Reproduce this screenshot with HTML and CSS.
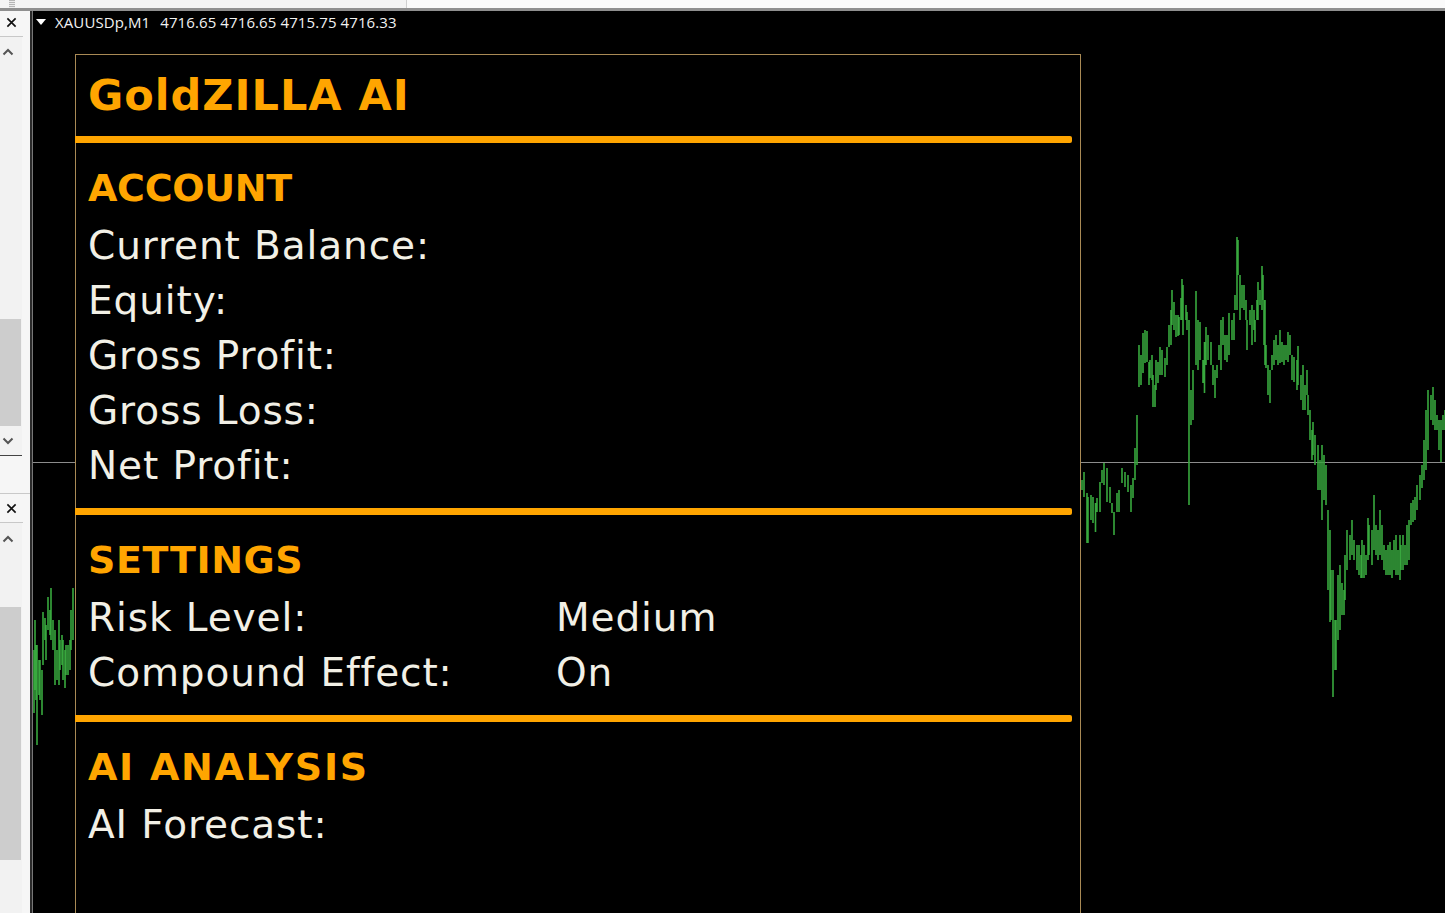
FILE: index.html
```html
<!DOCTYPE html>
<html lang="en">
<head>
<meta charset="utf-8">
<title>GoldZILLA AI</title>
<link rel="stylesheet" href="styles.css">
</head>
<body>
<div class="app">
  <div class="topbar"><div class="tab-a"><div class="grip"></div></div><div class="tab-b"></div></div>
  <div class="main">
    <aside class="side">
      <section class="dock dock-a">
        <div class="dock-head"><svg class="ico" viewBox="0 0 12 12"><path d="M1.5 1.5l9 9M10.5 1.5l-9 9"/></svg></div>
        <div class="track">
          <svg class="chev" viewBox="0 0 12 8"><path d="M1.5 6.5L6 2l4.5 4.5"/></svg>
          <div class="gap-a"></div>
          <div class="thumb thumb-a"></div>
          <svg class="chev" viewBox="0 0 12 8"><path d="M1.5 1.5L6 6l4.5-4.5"/></svg>
        </div>
      </section>
      <section class="dock dock-b">
        <div class="dock-head"><svg class="ico" viewBox="0 0 12 12"><path d="M1.5 1.5l9 9M10.5 1.5l-9 9"/></svg></div>
        <div class="track">
          <svg class="chev" viewBox="0 0 12 8"><path d="M1.5 6.5L6 2l4.5 4.5"/></svg>
          <div class="gap-b"></div>
          <div class="thumb thumb-b"></div>
        </div>
      </section>
    </aside>
    <main class="chart">
      <svg class="plot" viewBox="33 11 1412 902" aria-hidden="true">
        <path class="cross" d="M33 462.5H1445"/>
        <path class="bars" d="M34 650V713M35 620V690M36 645V700M37 645V745M39 660V695M40 660V700M42 670V715M43 612V665M45 618V640M46 625V660M48 597V630M50 610V635M51 588V640M53 620V650M55 630V685M57 650V680M59 620V685M60 640V670M62 635V665M63 640V680M65 650V688M66 645V675M68 645V675M70 640V670M71 610V650M73 588V640M1082 480V490M1084 472V497M1087 493V543M1088 497V543M1091 495V520M1093 497V523M1095.5 503V532M1097 498V512M1100 482V512M1102 470V483M1104 463V485M1107 468V502M1110 487V503M1112 503V513M1114 512V535M1117 493V512M1119 490V512M1122 468V483M1125 472V487M1128 475V492M1131 485V512M1133 478V498M1135 448V480M1137 415V465M1139 345V387M1141 355V385M1143 333V373M1145 330V363M1147 331V362M1149 362V385M1150 360V378M1152 355V380M1153 375V407M1155 385V407M1156 360V390M1158 362V383M1160 347V375M1162 350V375M1165 358V377M1167 347V365M1169 325V347M1171 310V345M1172 290V325M1174 302V330M1176 315V337M1178 315V336M1179 317V335M1181 298V320M1182 279V320M1183 285V335M1186 305V320M1187 312V330M1189 320V505M1191 390V425M1193 370V420M1196 291V365M1198 320V370M1200 322V360M1203 360V383M1204.5 342V393M1206 327V365M1208 335V360M1211 342V365M1213 365V385M1215 370V398M1217 365V378M1219 345V360M1221 320V370M1223 317V345M1225 335V360M1227 335V362M1229 313V355M1232 320V340M1234 313V340M1235 295V310M1237 237V310M1238 240V275M1240 275V320M1242 285V308M1244 285V310M1246 300V320M1247 320V350M1250 310V325M1252 305V345M1254 310V330M1255 320V342M1257 300V320M1258 282V320M1260 290V305M1262 266V310M1263 275V300M1264 300V345M1265 300V365M1266 345V368M1268 365V395M1270 370V403M1272 355V370M1274 340V365M1276 335V360M1278 345V365M1280 330V363M1282 342V362M1284 345V365M1286 345V360M1288 332V362M1290 335V355M1292 355V380M1294 357V382M1297 360V390M1298 346V385M1301 375V400M1303 365V410M1305 385V410M1307 370V395M1308 395V415M1310 410V440M1312 430V460M1313 422V455M1315 435V465M1318 445V490M1320 460V490M1322 445V520M1324 455V500M1326 465V505M1328 510V590M1330 530V622M1331 570V620M1333 570V697M1335 620V670M1336 620V670M1338 575V640M1340 565V630M1342 583V615M1344 590V615M1345 555V600M1347 530V570M1350 535V560M1352 520V555M1354 540V560M1357 545V570M1359 545V575M1361 555V578M1362 540V578M1364 545V578M1366 555V575M1368 518V560M1369 525V555M1372 530V565M1374 495V550M1376 525V555M1378 530V560M1380 510V555M1382 525V560M1384 545V570M1386 550V575M1388 545V575M1390 542V575M1392 550V578M1394 540V570M1396 535V575M1398 550V575M1400 535V580M1401 545V570M1403 535V570M1405 545V565M1407 525V565M1409 520V560M1411 503V525M1413 500V522M1415 497V520M1417 485V510M1420 475V500M1422 465V488M1424 440V480M1426 410V470M1428 390V450M1431 395V420M1433 387V425M1435 400V430M1437 415V430M1439 420V450M1441 420V462M1443 415V430M1445 410V430"/>
      </svg>
      <div class="legend">
        <svg class="tri" viewBox="0 0 10 6"><path d="M0 0H10L5 6Z"/></svg>
        <span class="sym">XAUUSDp,M1</span><span class="ohlc">4716.65 4716.65 4715.75 4716.33</span>
      </div>
      <div class="panel">
        <h1 class="title">GoldZILLA AI</h1>
        <hr class="rule rule-title">
        <h2 class="heading heading-account">ACCOUNT</h2>
        <div class="row">Current Balance:</div>
        <div class="row">Equity:</div>
        <div class="row">Gross Profit:</div>
        <div class="row">Gross Loss:</div>
        <div class="row">Net Profit:</div>
        <hr class="rule rule-section">
        <h2 class="heading heading-settings">SETTINGS</h2>
        <div class="row kv"><span>Risk Level:</span><span>Medium</span></div>
        <div class="row kv"><span>Compound Effect:</span><span>On</span></div>
        <hr class="rule rule-section">
        <h2 class="heading heading-ai">AI ANALYSIS</h2>
        <div class="row">AI Forecast:</div>
      </div>
    </main>
  </div>
</div>
</body>
</html>
```
FILE: styles.css
```css
* { box-sizing: border-box; }
html, body { margin: 0; padding: 0; background: #000; }
.app { width: 1445px; height: 913px; overflow: hidden; display: flex; flex-direction: column; background: #f0f0f0; }

.topbar { height: 11px; flex: none; display: flex; background: #f0f0f0; border-bottom: 3px solid #8f8f8f; }
.tab-a { width: 407px; border-right: 1px solid #d0d0d0; background: #f4f4f4; padding-left: 9px; }
.grip { width: 6px; height: 8px; background: repeating-linear-gradient(180deg, #b5b5b5 0 1px, #ececec 1px 2px); }
.tab-b { flex: 1; background: #fafafa; }

.main { flex: 1; display: flex; min-height: 0; }

.side { width: 33px; flex: none; display: flex; flex-direction: column; background: #f6f6f6; border-right: 1px solid #777; box-shadow: inset -2px 0 0 #2b2b2b; }
.dock { display: flex; flex-direction: column; width: 30px; }
.dock-a { height: 483px; flex: none; border-bottom: 1px solid #c9c9c9; }
.dock-b { flex: 1; }
.dock-head { height: 26px; flex: none; display: flex; align-items: center; padding: 0 0 2px 6px; border-bottom: 1px solid #c8c8c8; margin-right: 7px; }
.dock-b .dock-head { height: 29px; padding-bottom: 0; }
.ico { width: 11px; height: 11px; fill: none; stroke: #111; stroke-width: 1.8; }
.track { width: 22px; display: flex; flex-direction: column; background: #f2f2f2; }
.dock-a .track { height: 419px; flex: none; padding-top: 11px; border-bottom: 1px solid #444; }
.dock-b .track { flex: 1; padding-top: 12px; }
.chev { width: 12px; height: 8px; flex: none; margin-left: 2px; fill: none; stroke: #555; stroke-width: 2; }
.gap-a { height: 263px; flex: none; }
.gap-b { height: 64px; flex: none; }
.thumb { width: 21px; background: #cdcdcd; flex: none; }
.thumb-a { height: 107px; margin-bottom: 11px; }
.thumb-b { height: 253px; }

.chart { flex: 1; position: relative; background: #000; overflow: hidden; }
.plot { position: absolute; left: 0; top: 0; width: 1412px; height: 902px; display: block; }
.cross { stroke: #8c8c8c; stroke-width: 1; fill: none; }
.bars { stroke: #38a83e; stroke-width: 1.6; fill: none; }

.legend { position: absolute; left: 3px; top: 1px; display: flex; align-items: center; color: #f2f2f2; font: 15px/20px "Open Sans", "Noto Sans", sans-serif; letter-spacing: .1px; white-space: pre; }
.tri { width: 10px; height: 6px; fill: #fff; margin-right: 9px; }
.sym { margin-right: 10px; }

.panel { position: absolute; left: 42px; top: 43px; width: 1006px; height: 900px; background: #000; border: 1px solid #a98a55; padding: 0 8px 0 0; font-family: "DejaVu Sans", sans-serif; }
.title { margin: 14px 0 0 12px; font-size: 43px; line-height: 52px; font-weight: 700; letter-spacing: 1px; color: #ffa500; }
.rule { display: block; height: 7px; margin: 0 0 0 -1px; border: 0; background: #ffa500; border-radius: 0 2px 2px 0; }
.rule-title { margin-top: 15px; }
.rule-section { margin-top: 15px; }
.heading { margin: 22px 0 7px 12px; font-size: 38px; line-height: 46px; font-weight: 700; color: #ffa500; }
.heading-account { letter-spacing: -.3px; }
.heading-settings { letter-spacing: .6px; }
.heading-ai { letter-spacing: 1.7px; }
.row { margin-left: 12px; height: 55px; line-height: 55px; font-size: 39px; letter-spacing: .9px; color: #f2f0e6; white-space: pre; }
.kv { display: grid; grid-template-columns: 468px 1fr; }
```
